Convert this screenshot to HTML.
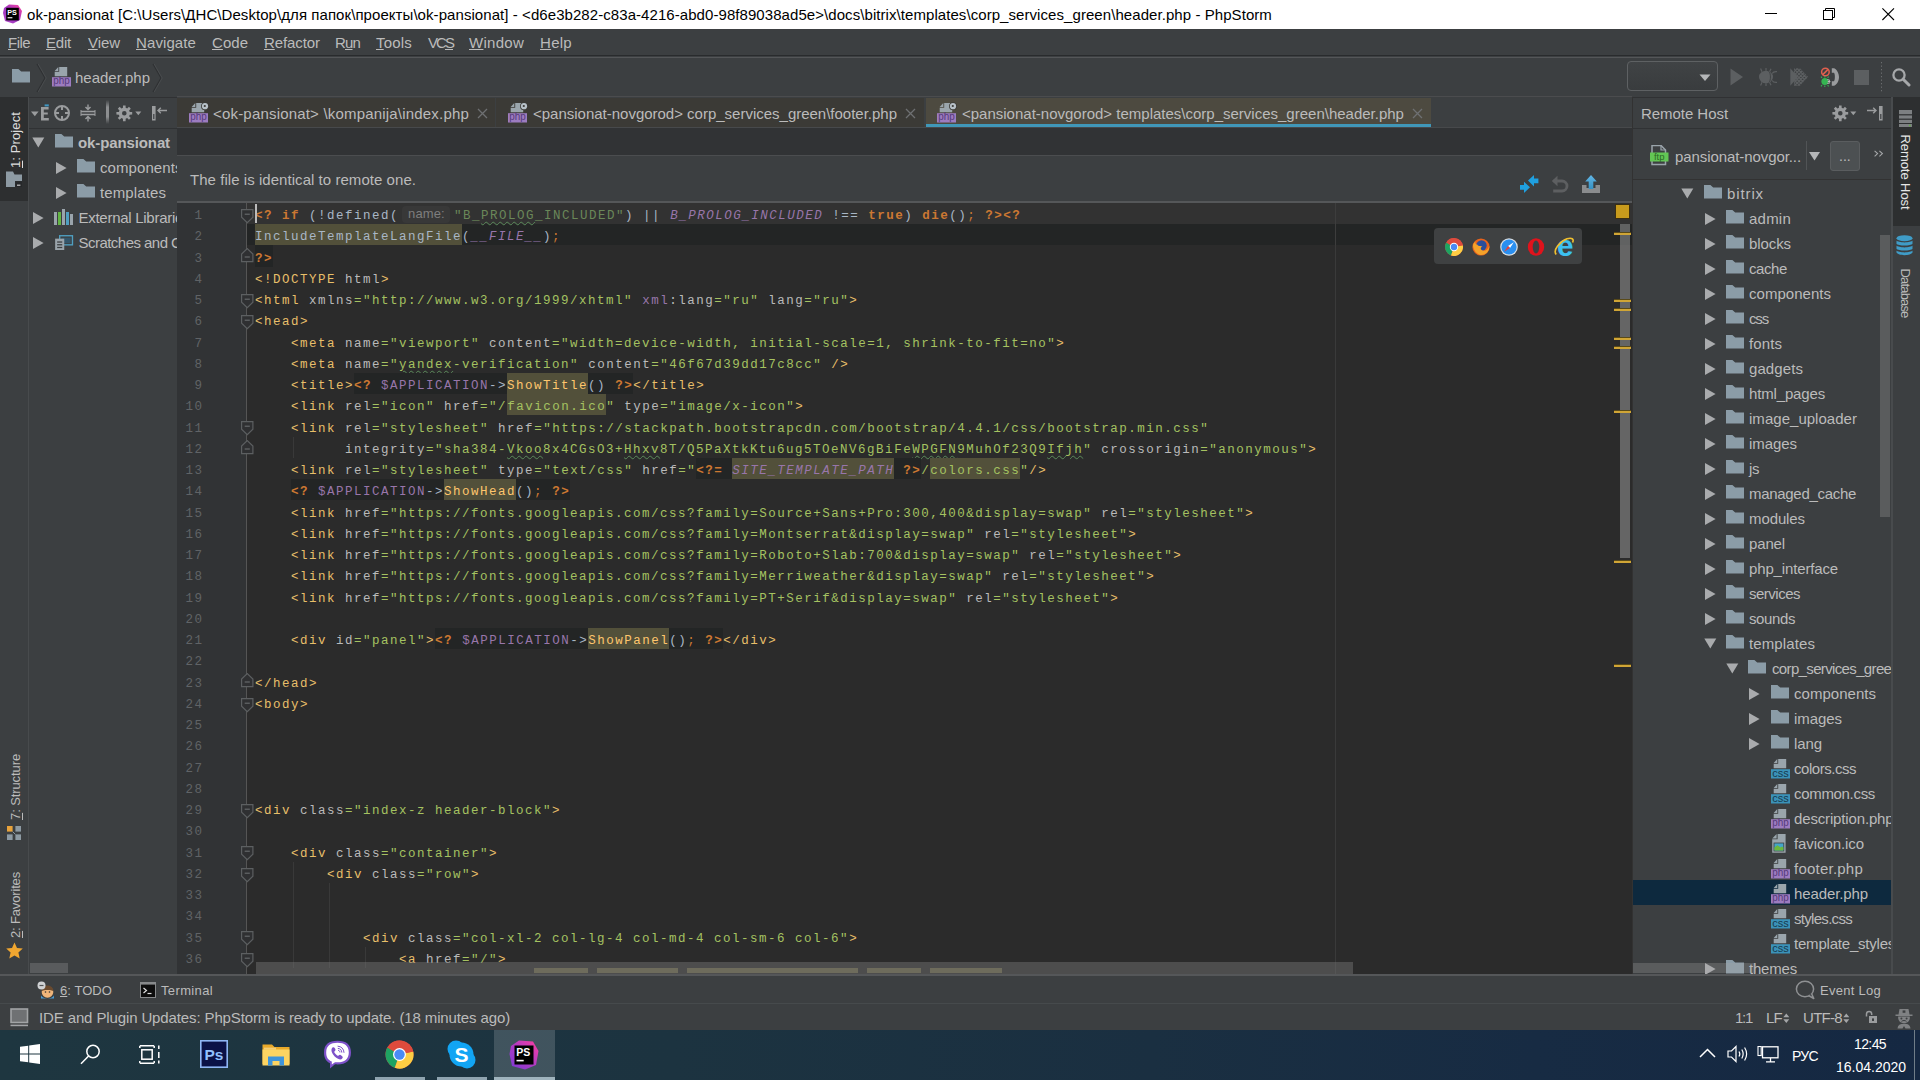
<!DOCTYPE html>
<html><head><meta charset="utf-8"><title>PhpStorm</title><style>
html,body{margin:0;padding:0;}
body{width:1920px;height:1080px;overflow:hidden;position:relative;background:#3c3f41;font-family:"Liberation Sans",sans-serif;}
.b{position:absolute;}
.t{position:absolute;white-space:pre;height:20px;line-height:20px;font-family:"Liberation Sans",sans-serif;}
.t u{text-decoration:underline;text-underline-offset:1px;text-decoration-thickness:1px;}
.cl{position:absolute;left:255px;height:21px;line-height:25.6px;white-space:pre;font-family:"Liberation Mono",monospace;font-size:12.5px;letter-spacing:1.5px;color:#a9b7c6;}
.ln{position:absolute;left:177px;width:26.5px;text-align:right;height:21px;line-height:25.6px;font-family:"Liberation Mono",monospace;font-size:12.5px;letter-spacing:1.5px;color:#606366;}
.cl span{display:inline-block;height:100%;vertical-align:top;}
.k{color:#cc7832;font-weight:bold;}
.o{color:#cc7832;}
.tg{color:#e8bf6a;}
.at{color:#bababa;}
.av{color:#a5c261;}
.st{color:#6a8759;}
.cn{color:#9876aa;font-style:italic;}
.vr{color:#9876aa;}
.fn{color:#ffc66d;}
.ww{background:#52503a;}
.pb{background:#232525;}
.wv{text-decoration:underline wavy #5a8a5a;text-decoration-thickness:1px;text-underline-offset:2px;}
</style></head><body>
<div class="b" style="left:0px;top:0px;width:1920px;height:29px;background:#ffffff;"></div>
<div class="t " style="left:27px;top:5px;font-size:15px;color:#000000;letter-spacing:0.067px;">ok-pansionat [C:\Users\ДНС\Desktop\для папок\проекты\ok-pansionat] - &lt;d6e3b282-c83a-4216-abd0-98f89038ad5e&gt;\docs\bitrix\templates\corp_services_green\header.php - PhpStorm</div>
<div class="b" style="left:0px;top:29px;width:1920px;height:27px;background:#3c3f41;"></div>
<div class="b" style="left:0px;top:55px;width:1920px;height:1px;background:#292b2d;"></div>
<div class="b" style="left:0px;top:56px;width:1920px;height:1px;background:#3c3f41;"></div>
<div class="t " style="left:8px;top:33px;font-size:15px;color:#bbbbbb;letter-spacing:-0.543px;"><u>F</u>ile</div>
<div class="t " style="left:46px;top:33px;font-size:15px;color:#bbbbbb;letter-spacing:-0.212px;"><u>E</u>dit</div>
<div class="t " style="left:88px;top:33px;font-size:15px;color:#bbbbbb;letter-spacing:-0.061px;"><u>V</u>iew</div>
<div class="t " style="left:136px;top:33px;font-size:15px;color:#bbbbbb;letter-spacing:0.100px;"><u>N</u>avigate</div>
<div class="t " style="left:212px;top:33px;font-size:15px;color:#bbbbbb;letter-spacing:0.035px;"><u>C</u>ode</div>
<div class="t " style="left:264px;top:33px;font-size:15px;color:#bbbbbb;letter-spacing:-0.086px;"><u>R</u>efactor</div>
<div class="t " style="left:335px;top:33px;font-size:15px;color:#bbbbbb;letter-spacing:-0.839px;">R<u>u</u>n</div>
<div class="t " style="left:376px;top:33px;font-size:15px;color:#bbbbbb;letter-spacing:0.196px;"><u>T</u>ools</div>
<div class="t " style="left:428px;top:33px;font-size:15px;color:#bbbbbb;letter-spacing:-1.948px;">VC<u>S</u></div>
<div class="t " style="left:469px;top:33px;font-size:15px;color:#bbbbbb;letter-spacing:0.275px;"><u>W</u>indow</div>
<div class="t " style="left:540px;top:33px;font-size:15px;color:#bbbbbb;letter-spacing:0.287px;"><u>H</u>elp</div>
<div class="b" style="left:0px;top:57px;width:1920px;height:40px;background:#3c3f41;"></div>
<div class="b" style="left:0px;top:57px;width:1920px;height:1px;background:#545658;"></div>
<div class="t " style="left:75px;top:68px;font-size:15px;color:#bbbbbb;letter-spacing:-0.008px;">header.php</div>
<div class="b" style="left:0px;top:97px;width:28px;height:879px;background:#3c3f41;"></div>
<div class="b" style="left:0px;top:97px;width:28px;height:103.5px;background:#2d2f30;"></div>
<div class="b" style="left:28px;top:97px;width:1px;height:879px;background:#484b4d;"></div>
<div class="b" style="left:29px;top:97px;width:149px;height:879px;background:#3c3f41;"></div>
<div class="b" style="left:29px;top:128px;width:148px;height:1px;background:#303234;"></div>
<div class="b" style="left:29px;top:97px;width:148px;height:1px;background:#303133;"></div>
<div class="b" style="left:1632px;top:97px;width:1px;height:879px;background:#323232;"></div>
<div class="b" style="left:1633px;top:97px;width:258px;height:879px;background:#3c3f41;"></div>
<div class="b" style="left:1633px;top:128px;width:258px;height:1px;background:#303234;"></div>
<div class="b" style="left:1632px;top:97px;width:288px;height:1px;background:#303133;"></div>
<div class="b" style="left:1633px;top:179px;width:258px;height:1px;background:#323232;"></div>
<div class="t " style="left:1641px;top:104px;font-size:15px;color:#bbbbbb;letter-spacing:-0.048px;">Remote Host</div>
<svg class="b" style="left:32px;top:137px;" width="13" height="11" viewBox="0 0 13 11"><path d="M0.3 0.5H12.3L6.3 10.5Z" fill="#a9abad"/></svg>
<svg class="b" style="left:55px;top:134.4px;" width="18" height="14" viewBox="0 0 18 14"><path d="M0 0H6.4L9.2 2.6H18V13.6H0Z" fill="#8b9ca7"/></svg>
<div class="t " style="left:78px;top:133px;font-size:15px;color:#bbbbbb;font-weight:bold;letter-spacing:-0.112px;">ok-pansionat</div>
<svg class="b" style="left:56px;top:162px;" width="11" height="12" viewBox="0 0 11 12"><path d="M0 0L10.6 6L0 12Z" fill="#a9abad"/></svg>
<svg class="b" style="left:77px;top:159.4px;" width="18" height="14" viewBox="0 0 18 14"><path d="M0 0H6.4L9.2 2.6H18V13.6H0Z" fill="#8b9ca7"/></svg>
<div class="t " style="left:100px;top:158px;font-size:15px;color:#bbbbbb;letter-spacing:0.078px;">components</div>
<svg class="b" style="left:56px;top:187px;" width="11" height="12" viewBox="0 0 11 12"><path d="M0 0L10.6 6L0 12Z" fill="#a9abad"/></svg>
<svg class="b" style="left:77px;top:184.4px;" width="18" height="14" viewBox="0 0 18 14"><path d="M0 0H6.4L9.2 2.6H18V13.6H0Z" fill="#8b9ca7"/></svg>
<div class="t " style="left:100px;top:183px;font-size:15px;color:#bbbbbb;letter-spacing:0.107px;">templates</div>
<svg class="b" style="left:33px;top:212px;" width="11" height="12" viewBox="0 0 11 12"><path d="M0 0L10.6 6L0 12Z" fill="#a9abad"/></svg>
<svg class="b" style="left:54px;top:209px;" width="21" height="16" viewBox="0 0 21 16"><rect x="0" y="3" width="3" height="13" fill="#9aa4ab"/><rect x="4" y="3" width="3" height="13" fill="#62b543"/><rect x="8" y="0" width="3" height="16" fill="#9aa4ab"/><rect x="12" y="3" width="3" height="13" fill="#4f9fc0"/><rect x="16" y="5" width="3" height="11" fill="#9aa4ab"/></svg>
<div class="t " style="left:78.5px;top:208px;font-size:15px;color:#bbbbbb;letter-spacing:-0.274px;">External Libraries</div>
<svg class="b" style="left:33px;top:237px;" width="11" height="12" viewBox="0 0 11 12"><path d="M0 0L10.6 6L0 12Z" fill="#a9abad"/></svg>
<svg class="b" style="left:55px;top:234.5px;" width="18.5" height="15.5" viewBox="0 0 20 17"><rect x="5" y="0.8" width="14" height="10" fill="none" stroke="#4f9fc0" stroke-width="1.5"/><rect x="7" y="3" width="10" height="6" fill="#33566b"/><rect x="0" y="4" width="10" height="12.5" fill="#9aa4ab"/><rect x="2.2" y="7" width="5.6" height="1.4" fill="#3c3f41"/><rect x="2.2" y="10" width="5.6" height="1.4" fill="#3c3f41"/><rect x="2.2" y="13" width="5.6" height="1.4" fill="#3c3f41"/></svg>
<div class="t " style="left:78.5px;top:233px;font-size:15px;color:#bbbbbb;letter-spacing:-0.532px;">Scratches and Consoles</div>
<div class="b" style="left:30px;top:963px;width:38px;height:10px;background:#595b5d;"></div>
<svg class="b" style="left:1681px;top:188px;" width="13" height="11" viewBox="0 0 13 11"><path d="M0.3 0.5H12.3L6.3 10.5Z" fill="#a9abad"/></svg>
<svg class="b" style="left:1704px;top:185.4px;" width="18" height="14" viewBox="0 0 18 14"><path d="M0 0H6.4L9.2 2.6H18V13.6H0Z" fill="#8b9ca7"/></svg>
<div class="t " style="left:1727px;top:184px;font-size:15px;color:#bbbbbb;letter-spacing:0.888px;">bitrix</div>
<svg class="b" style="left:1705px;top:213px;" width="11" height="12" viewBox="0 0 11 12"><path d="M0 0L10.6 6L0 12Z" fill="#a9abad"/></svg>
<svg class="b" style="left:1726px;top:210.4px;" width="18" height="14" viewBox="0 0 18 14"><path d="M0 0H6.4L9.2 2.6H18V13.6H0Z" fill="#8b9ca7"/></svg>
<div class="t " style="left:1749px;top:209px;font-size:15px;color:#bbbbbb;letter-spacing:0.229px;">admin</div>
<svg class="b" style="left:1705px;top:238px;" width="11" height="12" viewBox="0 0 11 12"><path d="M0 0L10.6 6L0 12Z" fill="#a9abad"/></svg>
<svg class="b" style="left:1726px;top:235.4px;" width="18" height="14" viewBox="0 0 18 14"><path d="M0 0H6.4L9.2 2.6H18V13.6H0Z" fill="#8b9ca7"/></svg>
<div class="t " style="left:1749px;top:234px;font-size:15px;color:#bbbbbb;letter-spacing:-0.086px;">blocks</div>
<svg class="b" style="left:1705px;top:263px;" width="11" height="12" viewBox="0 0 11 12"><path d="M0 0L10.6 6L0 12Z" fill="#a9abad"/></svg>
<svg class="b" style="left:1726px;top:260.4px;" width="18" height="14" viewBox="0 0 18 14"><path d="M0 0H6.4L9.2 2.6H18V13.6H0Z" fill="#8b9ca7"/></svg>
<div class="t " style="left:1749px;top:259px;font-size:15px;color:#bbbbbb;letter-spacing:-0.406px;">cache</div>
<svg class="b" style="left:1705px;top:288px;" width="11" height="12" viewBox="0 0 11 12"><path d="M0 0L10.6 6L0 12Z" fill="#a9abad"/></svg>
<svg class="b" style="left:1726px;top:285.4px;" width="18" height="14" viewBox="0 0 18 14"><path d="M0 0H6.4L9.2 2.6H18V13.6H0Z" fill="#8b9ca7"/></svg>
<div class="t " style="left:1749px;top:284px;font-size:15px;color:#bbbbbb;letter-spacing:0.028px;">components</div>
<svg class="b" style="left:1705px;top:313px;" width="11" height="12" viewBox="0 0 11 12"><path d="M0 0L10.6 6L0 12Z" fill="#a9abad"/></svg>
<svg class="b" style="left:1726px;top:310.4px;" width="18" height="14" viewBox="0 0 18 14"><path d="M0 0H6.4L9.2 2.6H18V13.6H0Z" fill="#8b9ca7"/></svg>
<div class="t " style="left:1749px;top:309px;font-size:15px;color:#bbbbbb;letter-spacing:-1.167px;">css</div>
<svg class="b" style="left:1705px;top:338px;" width="11" height="12" viewBox="0 0 11 12"><path d="M0 0L10.6 6L0 12Z" fill="#a9abad"/></svg>
<svg class="b" style="left:1726px;top:335.4px;" width="18" height="14" viewBox="0 0 18 14"><path d="M0 0H6.4L9.2 2.6H18V13.6H0Z" fill="#8b9ca7"/></svg>
<div class="t " style="left:1749px;top:334px;font-size:15px;color:#bbbbbb;letter-spacing:0.096px;">fonts</div>
<svg class="b" style="left:1705px;top:363px;" width="11" height="12" viewBox="0 0 11 12"><path d="M0 0L10.6 6L0 12Z" fill="#a9abad"/></svg>
<svg class="b" style="left:1726px;top:360.4px;" width="18" height="14" viewBox="0 0 18 14"><path d="M0 0H6.4L9.2 2.6H18V13.6H0Z" fill="#8b9ca7"/></svg>
<div class="t " style="left:1749px;top:359px;font-size:15px;color:#bbbbbb;letter-spacing:0.089px;">gadgets</div>
<svg class="b" style="left:1705px;top:388px;" width="11" height="12" viewBox="0 0 11 12"><path d="M0 0L10.6 6L0 12Z" fill="#a9abad"/></svg>
<svg class="b" style="left:1726px;top:385.4px;" width="18" height="14" viewBox="0 0 18 14"><path d="M0 0H6.4L9.2 2.6H18V13.6H0Z" fill="#8b9ca7"/></svg>
<div class="t " style="left:1749px;top:384px;font-size:15px;color:#bbbbbb;letter-spacing:-0.155px;">html_pages</div>
<svg class="b" style="left:1705px;top:413px;" width="11" height="12" viewBox="0 0 11 12"><path d="M0 0L10.6 6L0 12Z" fill="#a9abad"/></svg>
<svg class="b" style="left:1726px;top:410.4px;" width="18" height="14" viewBox="0 0 18 14"><path d="M0 0H6.4L9.2 2.6H18V13.6H0Z" fill="#8b9ca7"/></svg>
<div class="t " style="left:1749px;top:409px;font-size:15px;color:#bbbbbb;letter-spacing:0.030px;">image_uploader</div>
<svg class="b" style="left:1705px;top:438px;" width="11" height="12" viewBox="0 0 11 12"><path d="M0 0L10.6 6L0 12Z" fill="#a9abad"/></svg>
<svg class="b" style="left:1726px;top:435.4px;" width="18" height="14" viewBox="0 0 18 14"><path d="M0 0H6.4L9.2 2.6H18V13.6H0Z" fill="#8b9ca7"/></svg>
<div class="t " style="left:1749px;top:434px;font-size:15px;color:#bbbbbb;letter-spacing:-0.059px;">images</div>
<svg class="b" style="left:1705px;top:463px;" width="11" height="12" viewBox="0 0 11 12"><path d="M0 0L10.6 6L0 12Z" fill="#a9abad"/></svg>
<svg class="b" style="left:1726px;top:460.4px;" width="18" height="14" viewBox="0 0 18 14"><path d="M0 0H6.4L9.2 2.6H18V13.6H0Z" fill="#8b9ca7"/></svg>
<div class="t " style="left:1749px;top:459px;font-size:15px;color:#bbbbbb;letter-spacing:-0.416px;">js</div>
<svg class="b" style="left:1705px;top:488px;" width="11" height="12" viewBox="0 0 11 12"><path d="M0 0L10.6 6L0 12Z" fill="#a9abad"/></svg>
<svg class="b" style="left:1726px;top:485.4px;" width="18" height="14" viewBox="0 0 18 14"><path d="M0 0H6.4L9.2 2.6H18V13.6H0Z" fill="#8b9ca7"/></svg>
<div class="t " style="left:1749px;top:484px;font-size:15px;color:#bbbbbb;letter-spacing:-0.302px;">managed_cache</div>
<svg class="b" style="left:1705px;top:513px;" width="11" height="12" viewBox="0 0 11 12"><path d="M0 0L10.6 6L0 12Z" fill="#a9abad"/></svg>
<svg class="b" style="left:1726px;top:510.4px;" width="18" height="14" viewBox="0 0 18 14"><path d="M0 0H6.4L9.2 2.6H18V13.6H0Z" fill="#8b9ca7"/></svg>
<div class="t " style="left:1749px;top:509px;font-size:15px;color:#bbbbbb;letter-spacing:-0.100px;">modules</div>
<svg class="b" style="left:1705px;top:538px;" width="11" height="12" viewBox="0 0 11 12"><path d="M0 0L10.6 6L0 12Z" fill="#a9abad"/></svg>
<svg class="b" style="left:1726px;top:535.4px;" width="18" height="14" viewBox="0 0 18 14"><path d="M0 0H6.4L9.2 2.6H18V13.6H0Z" fill="#8b9ca7"/></svg>
<div class="t " style="left:1749px;top:534px;font-size:15px;color:#bbbbbb;letter-spacing:-0.141px;">panel</div>
<svg class="b" style="left:1705px;top:563px;" width="11" height="12" viewBox="0 0 11 12"><path d="M0 0L10.6 6L0 12Z" fill="#a9abad"/></svg>
<svg class="b" style="left:1726px;top:560.4px;" width="18" height="14" viewBox="0 0 18 14"><path d="M0 0H6.4L9.2 2.6H18V13.6H0Z" fill="#8b9ca7"/></svg>
<div class="t " style="left:1749px;top:559px;font-size:15px;color:#bbbbbb;letter-spacing:-0.146px;">php_interface</div>
<svg class="b" style="left:1705px;top:588px;" width="11" height="12" viewBox="0 0 11 12"><path d="M0 0L10.6 6L0 12Z" fill="#a9abad"/></svg>
<svg class="b" style="left:1726px;top:585.4px;" width="18" height="14" viewBox="0 0 18 14"><path d="M0 0H6.4L9.2 2.6H18V13.6H0Z" fill="#8b9ca7"/></svg>
<div class="t " style="left:1749px;top:584px;font-size:15px;color:#bbbbbb;letter-spacing:-0.502px;">services</div>
<svg class="b" style="left:1705px;top:613px;" width="11" height="12" viewBox="0 0 11 12"><path d="M0 0L10.6 6L0 12Z" fill="#a9abad"/></svg>
<svg class="b" style="left:1726px;top:610.4px;" width="18" height="14" viewBox="0 0 18 14"><path d="M0 0H6.4L9.2 2.6H18V13.6H0Z" fill="#8b9ca7"/></svg>
<div class="t " style="left:1749px;top:609px;font-size:15px;color:#bbbbbb;letter-spacing:-0.395px;">sounds</div>
<svg class="b" style="left:1704px;top:638px;" width="13" height="11" viewBox="0 0 13 11"><path d="M0.3 0.5H12.3L6.3 10.5Z" fill="#a9abad"/></svg>
<svg class="b" style="left:1726px;top:635.4px;" width="18" height="14" viewBox="0 0 18 14"><path d="M0 0H6.4L9.2 2.6H18V13.6H0Z" fill="#8b9ca7"/></svg>
<div class="t " style="left:1749px;top:634px;font-size:15px;color:#bbbbbb;letter-spacing:0.107px;">templates</div>
<svg class="b" style="left:1726px;top:663px;" width="13" height="11" viewBox="0 0 13 11"><path d="M0.3 0.5H12.3L6.3 10.5Z" fill="#a9abad"/></svg>
<svg class="b" style="left:1748px;top:660.4px;" width="18" height="14" viewBox="0 0 18 14"><path d="M0 0H6.4L9.2 2.6H18V13.6H0Z" fill="#8b9ca7"/></svg>
<div class="t " style="left:1772px;top:659px;font-size:15px;color:#bbbbbb;letter-spacing:-0.645px;">corp_services_green</div>
<svg class="b" style="left:1749px;top:688px;" width="11" height="12" viewBox="0 0 11 12"><path d="M0 0L10.6 6L0 12Z" fill="#a9abad"/></svg>
<svg class="b" style="left:1771px;top:685.4px;" width="18" height="14" viewBox="0 0 18 14"><path d="M0 0H6.4L9.2 2.6H18V13.6H0Z" fill="#8b9ca7"/></svg>
<div class="t " style="left:1794px;top:684px;font-size:15px;color:#bbbbbb;letter-spacing:0.028px;">components</div>
<svg class="b" style="left:1749px;top:713px;" width="11" height="12" viewBox="0 0 11 12"><path d="M0 0L10.6 6L0 12Z" fill="#a9abad"/></svg>
<svg class="b" style="left:1771px;top:710.4px;" width="18" height="14" viewBox="0 0 18 14"><path d="M0 0H6.4L9.2 2.6H18V13.6H0Z" fill="#8b9ca7"/></svg>
<div class="t " style="left:1794px;top:709px;font-size:15px;color:#bbbbbb;letter-spacing:-0.059px;">images</div>
<svg class="b" style="left:1749px;top:738px;" width="11" height="12" viewBox="0 0 11 12"><path d="M0 0L10.6 6L0 12Z" fill="#a9abad"/></svg>
<svg class="b" style="left:1771px;top:735.4px;" width="18" height="14" viewBox="0 0 18 14"><path d="M0 0H6.4L9.2 2.6H18V13.6H0Z" fill="#8b9ca7"/></svg>
<div class="t " style="left:1794px;top:734px;font-size:15px;color:#bbbbbb;letter-spacing:-0.090px;">lang</div>
<svg class="b" style="left:1771px;top:759px;overflow:visible;" width="19" height="20" viewBox="0 0 19 20"><path d="M7.2 0H15.2V9.2H2.7V4.8H7.2Z" fill="#9aa5ac"/><path d="M2.7 3.9L6.3 0V3.9Z" fill="#9aa5ac"/><rect x="0" y="10.2" width="19" height="9.3" fill="#3b92b8"/><text x="9.5" y="17.6" font-family="Liberation Sans, sans-serif" font-size="11.5" fill="#173a4e" text-anchor="middle" textLength="16.5" lengthAdjust="spacingAndGlyphs">css</text></svg>
<div class="t " style="left:1794px;top:759px;font-size:15px;color:#bbbbbb;letter-spacing:-0.468px;">colors.css</div>
<svg class="b" style="left:1771px;top:784px;overflow:visible;" width="19" height="20" viewBox="0 0 19 20"><path d="M7.2 0H15.2V9.2H2.7V4.8H7.2Z" fill="#9aa5ac"/><path d="M2.7 3.9L6.3 0V3.9Z" fill="#9aa5ac"/><rect x="0" y="10.2" width="19" height="9.3" fill="#3b92b8"/><text x="9.5" y="17.6" font-family="Liberation Sans, sans-serif" font-size="11.5" fill="#173a4e" text-anchor="middle" textLength="16.5" lengthAdjust="spacingAndGlyphs">css</text></svg>
<div class="t " style="left:1794px;top:784px;font-size:15px;color:#bbbbbb;letter-spacing:-0.319px;">common.css</div>
<svg class="b" style="left:1771px;top:809px;overflow:visible;" width="19" height="20" viewBox="0 0 19 20"><path d="M7.2 0H15.2V9.2H2.7V4.8H7.2Z" fill="#9aa5ac"/><path d="M2.7 3.9L6.3 0V3.9Z" fill="#9aa5ac"/><rect x="0" y="10.2" width="19" height="9.3" fill="#9d7cc0"/><text x="9.5" y="17.3" font-family="Liberation Sans, sans-serif" font-size="10" fill="#54397a" text-anchor="middle" textLength="16.5" lengthAdjust="spacingAndGlyphs">php</text></svg>
<div class="t " style="left:1794px;top:809px;font-size:15px;color:#bbbbbb;letter-spacing:-0.149px;">description.php</div>
<svg class="b" style="left:1771px;top:834px;overflow:visible;" width="19" height="20" viewBox="0 0 19 20"><path d="M6.6 0H14.6V18.8H1.2V5.3H6.6Z" fill="#9aa5ac"/><path d="M1.2 4.4L5.6 0V4.4Z" fill="#9aa5ac"/><rect x="2.6" y="8.6" width="10.6" height="8.8" fill="#3c3f41"/><rect x="3.4" y="9.4" width="9" height="7.2" fill="#45a5c9"/><path d="M3.4 16.6V13.4L6.4 11.2L9.6 13.4L11 12.6L12.4 13.6V16.6Z" fill="#6cb83c"/></svg>
<div class="t " style="left:1794px;top:834px;font-size:15px;color:#bbbbbb;letter-spacing:-0.079px;">favicon.ico</div>
<svg class="b" style="left:1771px;top:859px;overflow:visible;" width="19" height="20" viewBox="0 0 19 20"><path d="M7.2 0H15.2V9.2H2.7V4.8H7.2Z" fill="#9aa5ac"/><path d="M2.7 3.9L6.3 0V3.9Z" fill="#9aa5ac"/><rect x="0" y="10.2" width="19" height="9.3" fill="#9d7cc0"/><text x="9.5" y="17.3" font-family="Liberation Sans, sans-serif" font-size="10" fill="#54397a" text-anchor="middle" textLength="16.5" lengthAdjust="spacingAndGlyphs">php</text></svg>
<div class="t " style="left:1794px;top:859px;font-size:15px;color:#bbbbbb;letter-spacing:0.227px;">footer.php</div>
<div class="b" style="left:1633px;top:880px;width:258px;height:25px;background:#0d293e;"></div>
<svg class="b" style="left:1771px;top:884px;overflow:visible;" width="19" height="20" viewBox="0 0 19 20"><path d="M7.2 0H15.2V9.2H2.7V4.8H7.2Z" fill="#9aa5ac"/><path d="M2.7 3.9L6.3 0V3.9Z" fill="#9aa5ac"/><rect x="0" y="10.2" width="19" height="9.3" fill="#9d7cc0"/><text x="9.5" y="17.3" font-family="Liberation Sans, sans-serif" font-size="10" fill="#54397a" text-anchor="middle" textLength="16.5" lengthAdjust="spacingAndGlyphs">php</text></svg>
<div class="t " style="left:1794px;top:884px;font-size:15px;color:#bbbbbb;letter-spacing:-0.108px;">header.php</div>
<svg class="b" style="left:1771px;top:909px;overflow:visible;" width="19" height="20" viewBox="0 0 19 20"><path d="M7.2 0H15.2V9.2H2.7V4.8H7.2Z" fill="#9aa5ac"/><path d="M2.7 3.9L6.3 0V3.9Z" fill="#9aa5ac"/><rect x="0" y="10.2" width="19" height="9.3" fill="#3b92b8"/><text x="9.5" y="17.6" font-family="Liberation Sans, sans-serif" font-size="11.5" fill="#173a4e" text-anchor="middle" textLength="16.5" lengthAdjust="spacingAndGlyphs">css</text></svg>
<div class="t " style="left:1794px;top:909px;font-size:15px;color:#bbbbbb;letter-spacing:-0.701px;">styles.css</div>
<svg class="b" style="left:1771px;top:934px;overflow:visible;" width="19" height="20" viewBox="0 0 19 20"><path d="M7.2 0H15.2V9.2H2.7V4.8H7.2Z" fill="#9aa5ac"/><path d="M2.7 3.9L6.3 0V3.9Z" fill="#9aa5ac"/><rect x="0" y="10.2" width="19" height="9.3" fill="#3b92b8"/><text x="9.5" y="17.6" font-family="Liberation Sans, sans-serif" font-size="11.5" fill="#173a4e" text-anchor="middle" textLength="16.5" lengthAdjust="spacingAndGlyphs">css</text></svg>
<div class="t " style="left:1794px;top:934px;font-size:15px;color:#bbbbbb;letter-spacing:-0.205px;">template_styles.css</div>
<svg class="b" style="left:1705px;top:963px;" width="11" height="12" viewBox="0 0 11 12"><path d="M0 0L10.6 6L0 12Z" fill="#a9abad"/></svg>
<svg class="b" style="left:1726px;top:960.4px;" width="18" height="14" viewBox="0 0 18 14"><path d="M0 0H6.4L9.2 2.6H18V13.6H0Z" fill="#8b9ca7"/></svg>
<div class="t " style="left:1749px;top:959px;font-size:15px;color:#bbbbbb;letter-spacing:-0.198px;">themes</div>
<div class="b" style="left:1880px;top:235px;width:10px;height:282px;background:rgba(170,170,170,0.28);"></div>
<div class="b" style="left:1633px;top:963px;width:123px;height:10px;background:rgba(170,170,170,0.28);"></div>
<div class="b" style="left:177px;top:97px;width:1455px;height:31px;background:#3c3f41;"></div>
<div class="b" style="left:177px;top:96px;width:1455px;height:1px;background:#4b4c4e;"></div>
<div class="b" style="left:177px;top:98px;width:318px;height:30px;background:#3b3a36;"></div>
<div class="b" style="left:496px;top:98px;width:428px;height:30px;background:#3b3a36;"></div>
<div class="b" style="left:926px;top:98px;width:505px;height:30px;background:#4d4a40;"></div>
<div class="b" style="left:926px;top:124px;width:505px;height:4px;background:#4097b8;"></div>
<svg class="b" style="left:189px;top:103.3px;overflow:visible;" width="19" height="20" viewBox="0 0 19 20"><path d="M7.2 0H15.2V9.2H2.7V4.8H7.2Z" fill="#9aa5ac"/><path d="M2.7 3.9L6.3 0V3.9Z" fill="#9aa5ac"/><circle cx="16" cy="3.2" r="3.9" fill="#3b3a36"/><circle cx="16" cy="3.2" r="3.1" fill="#b7c1c8"/><circle cx="15.8" cy="3" r="1.1" fill="#3b3a36"/><rect x="0" y="10.2" width="19" height="9.3" fill="#9d7cc0"/><text x="9.5" y="17.3" font-family="Liberation Sans, sans-serif" font-size="10" fill="#54397a" text-anchor="middle" textLength="16.5" lengthAdjust="spacingAndGlyphs">php</text></svg>
<div class="t " style="left:213px;top:104px;font-size:15px;color:#bbbbbb;letter-spacing:0.190px;">&lt;ok-pansionat&gt; \kompanija\index.php</div>
<svg class="b" style="left:477px;top:108px;" width="11" height="11" viewBox="0 0 11 11"><path d="M1 1L10 10M10 1L1 10" stroke="#6e7072" stroke-width="1.3"/></svg>
<svg class="b" style="left:508px;top:103.3px;overflow:visible;" width="19" height="20" viewBox="0 0 19 20"><path d="M7.2 0H15.2V9.2H2.7V4.8H7.2Z" fill="#9aa5ac"/><path d="M2.7 3.9L6.3 0V3.9Z" fill="#9aa5ac"/><circle cx="16" cy="3.2" r="3.9" fill="#3b3a36"/><circle cx="16" cy="3.2" r="3.1" fill="#b7c1c8"/><circle cx="15.8" cy="3" r="1.1" fill="#3b3a36"/><rect x="0" y="10.2" width="19" height="9.3" fill="#9d7cc0"/><text x="9.5" y="17.3" font-family="Liberation Sans, sans-serif" font-size="10" fill="#54397a" text-anchor="middle" textLength="16.5" lengthAdjust="spacingAndGlyphs">php</text></svg>
<div class="t " style="left:533px;top:104px;font-size:15px;color:#bbbbbb;letter-spacing:-0.008px;">&lt;pansionat-novgorod&gt; corp_services_green\footer.php</div>
<svg class="b" style="left:905px;top:108px;" width="11" height="11" viewBox="0 0 11 11"><path d="M1 1L10 10M10 1L1 10" stroke="#6e7072" stroke-width="1.3"/></svg>
<svg class="b" style="left:937px;top:103.3px;overflow:visible;" width="19" height="20" viewBox="0 0 19 20"><path d="M7.2 0H15.2V9.2H2.7V4.8H7.2Z" fill="#9aa5ac"/><path d="M2.7 3.9L6.3 0V3.9Z" fill="#9aa5ac"/><circle cx="16" cy="3.2" r="3.9" fill="#3b3a36"/><circle cx="16" cy="3.2" r="3.1" fill="#b7c1c8"/><circle cx="15.8" cy="3" r="1.1" fill="#3b3a36"/><rect x="0" y="10.2" width="19" height="9.3" fill="#9d7cc0"/><text x="9.5" y="17.3" font-family="Liberation Sans, sans-serif" font-size="10" fill="#54397a" text-anchor="middle" textLength="16.5" lengthAdjust="spacingAndGlyphs">php</text></svg>
<div class="t " style="left:962px;top:104px;font-size:15px;color:#bbbbbb;letter-spacing:0.000px;">&lt;pansionat-novgorod&gt; templates\corp_services_green\header.php</div>
<svg class="b" style="left:1412px;top:108px;" width="11" height="11" viewBox="0 0 11 11"><path d="M1 1L10 10M10 1L1 10" stroke="#6e7072" stroke-width="1.3"/></svg>
<div class="b" style="left:177px;top:127px;width:1455px;height:1px;background:#47494b;"></div>
<div class="b" style="left:177px;top:128px;width:1455px;height:27px;background:#313335;"></div>
<div class="b" style="left:177px;top:155px;width:1455px;height:1px;background:#4b4d4f;"></div>
<div class="b" style="left:177px;top:156px;width:1455px;height:46px;background:#3c3f41;"></div>
<div class="b" style="left:177px;top:201px;width:1455px;height:2px;background:#555759;"></div>
<div class="t " style="left:190px;top:170px;font-size:15px;color:#bbbbbb;letter-spacing:0.048px;">The file is identical to remote one.</div>
<div class="b" style="left:177px;top:203px;width:1455px;height:771px;background:#2b2b2b;"></div>
<div class="b" style="left:177px;top:203px;width:70px;height:771px;background:#313335;"></div>
<div class="b" style="left:246px;top:203px;width:1px;height:771px;background:#555555;"></div>
<div class="b" style="left:1335px;top:203px;width:1px;height:771px;background:#3a3a3a;"></div>
<div class="b" style="left:1632px;top:97px;width:1px;height:879px;background:#323232;"></div>
<div class="b" style="left:1891px;top:97px;width:29px;height:879px;background:#3c3f41;"></div>
<div class="b" style="left:1891px;top:97px;width:2px;height:879px;background:#484b4d;"></div>
<div class="b" style="left:1893px;top:97px;width:27px;height:129px;background:#2d2f30;"></div>
<div class="b" style="left:0px;top:974px;width:1920px;height:2px;background:#555759;"></div>
<div class="b" style="left:0px;top:976px;width:1920px;height:28px;background:#3c3f41;"></div>
<div class="b" style="left:0px;top:1003px;width:1920px;height:1px;background:#464a4c;"></div>
<div class="b" style="left:0px;top:1004px;width:1920px;height:26px;background:#3c3f41;"></div>
<div class="t " style="left:60px;top:981px;font-size:13px;color:#bbbbbb;letter-spacing:0.066px;"><u>6</u>: TODO</div>
<div class="t " style="left:161px;top:981px;font-size:13px;color:#bbbbbb;letter-spacing:0.359px;">Terminal</div>
<div class="t " style="left:1820px;top:981px;font-size:13px;color:#bbbbbb;letter-spacing:0.273px;">Event Log</div>
<div class="t " style="left:39px;top:1008px;font-size:15px;color:#bbbbbb;letter-spacing:-0.122px;">IDE and Plugin Updates: PhpStorm is ready to update. (18 minutes ago)</div>
<div class="t " style="left:1735px;top:1008px;font-size:15px;color:#bbbbbb;letter-spacing:-1.284px;">1:1</div>
<div class="t " style="left:1766px;top:1008px;font-size:15px;color:#bbbbbb;letter-spacing:-0.753px;">LF</div>
<div class="t " style="left:1803px;top:1008px;font-size:15px;color:#bbbbbb;letter-spacing:-0.699px;">UTF-8</div>
<div class="b" style="left:247px;top:203px;width:1385px;height:21px;background:#323232;"></div>
<div class="b" style="left:247px;top:224px;width:1385px;height:21px;background:#232525;"></div>
<div class="b" style="left:293px;top:437px;width:1px;height:21px;background:#393939;"></div>
<div class="b" style="left:293px;top:862px;width:1px;height:106px;background:#393939;"></div>
<div class="b" style="left:329px;top:883px;width:1px;height:85px;background:#393939;"></div>
<div class="b" style="left:365px;top:947px;width:1px;height:21px;background:#393939;"></div>
<div class="ln" style="top:203px;line-height:27.6px">1</div>
<div class="cl" style="top:203px;height:21px;line-height:27.6px"><span class="k">&lt;?</span> <span class="k">if</span> (!defined(<span style="width:55px;"><span style="position:absolute;margin-left:3px;margin-top:3px;width:48px;height:17px;border-radius:4px;background:#383838;"></span><span style="position:relative;top:-3px;margin-left:9px;font-family:'Liberation Sans',sans-serif;font-size:13px;color:#7e7e7e;letter-spacing:0.1px;">name:</span></span><span class="st">"B_<span class="wv">PROLOG</span>_INCLUDED"</span>) || <span class="cn">B_PROLOG_INCLUDED</span> !== <span class="k">true</span>) <span class="k">die</span>()<span class="o">;</span> <span class="k">?&gt;&lt;?</span></div>
<div class="ln" style="top:224px;line-height:27.6px">2</div>
<div class="cl" style="top:224px;height:21px;line-height:27.6px"><span class="ww">IncludeTemplateLangFile</span>(<span class="cn">__FILE__</span>)<span class="o">;</span></div>
<div class="ln" style="top:245px;line-height:29.6px">3</div>
<div class="cl" style="top:245px;height:22px;line-height:29.6px"><span class="pb"><span class="k">?&gt;</span></span></div>
<div class="ln" style="top:267px;line-height:27.6px">4</div>
<div class="cl" style="top:267px;height:21px;line-height:27.6px"><span class="tg">&lt;!DOCTYPE </span><span class="at">html</span><span class="tg">&gt;</span></div>
<div class="ln" style="top:288px;line-height:27.6px">5</div>
<div class="cl" style="top:288px;height:21px;line-height:27.6px"><span class="tg">&lt;html</span> <span class="at">xmlns</span><span class="av">=&quot;http:<span>/</span>/www.w3.org/1999/xhtml&quot;</span> <span class="vr">xml</span><span class="at">:lang</span><span class="av">=&quot;ru&quot;</span> <span class="at">lang</span><span class="av">=&quot;ru&quot;</span><span class="tg">&gt;</span></div>
<div class="ln" style="top:309px;line-height:27.6px">6</div>
<div class="cl" style="top:309px;height:21px;line-height:27.6px"><span class="tg">&lt;head&gt;</span></div>
<div class="ln" style="top:330px;line-height:29.6px">7</div>
<div class="cl" style="top:330px;height:22px;line-height:29.6px">    <span class="tg">&lt;meta</span> <span class="at">name</span><span class="av">=&quot;viewport&quot;</span> <span class="at">content</span><span class="av">=&quot;width=device-width, initial-scale=1, shrink-to-fit=no&quot;</span><span class="tg">&gt;</span></div>
<div class="ln" style="top:352px;line-height:27.6px">8</div>
<div class="cl" style="top:352px;height:21px;line-height:27.6px">    <span class="tg">&lt;meta</span> <span class="at">name</span><span class="av">="<span class="wv">yandex</span>-verification"</span> <span class="at">content</span><span class="av">=&quot;46f67d39dd17c8cc&quot;</span> <span class="tg">/&gt;</span></div>
<div class="ln" style="top:373px;line-height:27.6px">9</div>
<div class="cl" style="top:373px;height:21px;line-height:27.6px">    <span class="tg">&lt;title&gt;</span><span class="pb"><span class="k">&lt;?</span> <span class="vr">$APPLICATION</span>-><span class="fn ww">ShowTitle</span>() <span class="k">?&gt;</span></span><span class="tg">&lt;/title&gt;</span></div>
<div class="ln" style="top:394px;line-height:27.6px">10</div>
<div class="cl" style="top:394px;height:21px;line-height:27.6px">    <span class="tg">&lt;link</span> <span class="at">rel</span><span class="av">=&quot;icon&quot;</span> <span class="at">href</span><span class="av">="/<span class="ww">favicon.ico</span>"</span> <span class="at">type</span><span class="av">=&quot;image/x-icon&quot;</span><span class="tg">&gt;</span></div>
<div class="ln" style="top:415px;line-height:29.6px">11</div>
<div class="cl" style="top:415px;height:22px;line-height:29.6px">    <span class="tg">&lt;link</span> <span class="at">rel</span><span class="av">=&quot;stylesheet&quot;</span> <span class="at">href</span><span class="av">=&quot;https:<span>/</span>/stackpath.bootstrapcdn.com/bootstrap/4.4.1/css/bootstrap.min.css&quot;</span></div>
<div class="ln" style="top:437px;line-height:27.6px">12</div>
<div class="cl" style="top:437px;height:21px;line-height:27.6px">          <span class="at">integrity</span><span class="av">="sha384-<span class="wv">Vkoo</span>8x4CGsO3+<span class="wv">Hhxv</span>8T/Q5PaXtkKtu6ug5TOeNV6gBiFe<span class="wv">WPGFN</span>9MuhOf23Q9<span class="wv">Ifjh</span>"</span> <span class="at">crossorigin</span><span class="av">=&quot;anonymous&quot;</span><span class="tg">&gt;</span></div>
<div class="ln" style="top:458px;line-height:27.6px">13</div>
<div class="cl" style="top:458px;height:21px;line-height:27.6px">    <span class="tg">&lt;link</span> <span class="at">rel</span><span class="av">=&quot;stylesheet&quot;</span> <span class="at">type</span><span class="av">=&quot;text/css&quot;</span> <span class="at">href</span><span class="av">=&quot;</span><span class="pb"><span class="k">&lt;?=</span> <span class="cn ww">SITE_TEMPLATE_PATH</span> <span class="k">?&gt;</span></span><span class="av">/<span class="ww">colors.css</span>"</span><span class="tg">/&gt;</span></div>
<div class="ln" style="top:479px;line-height:27.6px">14</div>
<div class="cl" style="top:479px;height:21px;line-height:27.6px">    <span class="pb"><span class="k">&lt;?</span> <span class="vr">$APPLICATION</span>-><span class="fn ww">ShowHead</span>()<span class="o">;</span> <span class="k">?&gt;</span></span></div>
<div class="ln" style="top:500px;line-height:29.6px">15</div>
<div class="cl" style="top:500px;height:22px;line-height:29.6px">    <span class="tg">&lt;link</span> <span class="at">href</span><span class="av">=&quot;https:<span>/</span>/fonts.googleapis.com/css?family=Source+Sans+Pro:300,400&amp;display=swap&quot;</span> <span class="at">rel</span><span class="av">=&quot;stylesheet&quot;</span><span class="tg">&gt;</span></div>
<div class="ln" style="top:522px;line-height:27.6px">16</div>
<div class="cl" style="top:522px;height:21px;line-height:27.6px">    <span class="tg">&lt;link</span> <span class="at">href</span><span class="av">=&quot;https:<span>/</span>/fonts.googleapis.com/css?family=Montserrat&amp;display=swap&quot;</span> <span class="at">rel</span><span class="av">=&quot;stylesheet&quot;</span><span class="tg">&gt;</span></div>
<div class="ln" style="top:543px;line-height:27.6px">17</div>
<div class="cl" style="top:543px;height:21px;line-height:27.6px">    <span class="tg">&lt;link</span> <span class="at">href</span><span class="av">=&quot;https:<span>/</span>/fonts.googleapis.com/css?family=Roboto+Slab:700&amp;display=swap&quot;</span> <span class="at">rel</span><span class="av">=&quot;stylesheet&quot;</span><span class="tg">&gt;</span></div>
<div class="ln" style="top:564px;line-height:27.6px">18</div>
<div class="cl" style="top:564px;height:21px;line-height:27.6px">    <span class="tg">&lt;link</span> <span class="at">href</span><span class="av">=&quot;https:<span>/</span>/fonts.googleapis.com/css?family=Merriweather&amp;display=swap&quot;</span> <span class="at">rel</span><span class="av">=&quot;stylesheet&quot;</span><span class="tg">&gt;</span></div>
<div class="ln" style="top:585px;line-height:29.6px">19</div>
<div class="cl" style="top:585px;height:22px;line-height:29.6px">    <span class="tg">&lt;link</span> <span class="at">href</span><span class="av">=&quot;https:<span>/</span>/fonts.googleapis.com/css?family=PT+Serif&amp;display=swap&quot;</span> <span class="at">rel</span><span class="av">=&quot;stylesheet&quot;</span><span class="tg">&gt;</span></div>
<div class="ln" style="top:607px;line-height:27.6px">20</div>
<div class="ln" style="top:628px;line-height:27.6px">21</div>
<div class="cl" style="top:628px;height:21px;line-height:27.6px">    <span class="tg">&lt;div</span> <span class="at">id</span><span class="av">=&quot;panel&quot;</span><span class="tg">&gt;</span><span class="pb"><span class="k">&lt;?</span> <span class="vr">$APPLICATION</span>-><span class="fn ww">ShowPanel</span>()<span class="o">;</span> <span class="k">?&gt;</span></span><span class="tg">&lt;/div&gt;</span></div>
<div class="ln" style="top:649px;line-height:27.6px">22</div>
<div class="ln" style="top:670px;line-height:29.6px">23</div>
<div class="cl" style="top:670px;height:22px;line-height:29.6px"><span class="tg">&lt;/head&gt;</span></div>
<div class="ln" style="top:692px;line-height:27.6px">24</div>
<div class="cl" style="top:692px;height:21px;line-height:27.6px"><span class="tg">&lt;body&gt;</span></div>
<div class="ln" style="top:713px;line-height:27.6px">25</div>
<div class="ln" style="top:734px;line-height:27.6px">26</div>
<div class="ln" style="top:755px;line-height:29.6px">27</div>
<div class="ln" style="top:777px;line-height:27.6px">28</div>
<div class="ln" style="top:798px;line-height:27.6px">29</div>
<div class="cl" style="top:798px;height:21px;line-height:27.6px"><span class="tg">&lt;div</span> <span class="at">class</span><span class="av">=&quot;index-z header-block&quot;</span><span class="tg">&gt;</span></div>
<div class="ln" style="top:819px;line-height:27.6px">30</div>
<div class="ln" style="top:840px;line-height:29.6px">31</div>
<div class="cl" style="top:840px;height:22px;line-height:29.6px">    <span class="tg">&lt;div</span> <span class="at">class</span><span class="av">=&quot;container&quot;</span><span class="tg">&gt;</span></div>
<div class="ln" style="top:862px;line-height:27.6px">32</div>
<div class="cl" style="top:862px;height:21px;line-height:27.6px">        <span class="tg">&lt;div</span> <span class="at">class</span><span class="av">=&quot;row&quot;</span><span class="tg">&gt;</span></div>
<div class="ln" style="top:883px;line-height:27.6px">33</div>
<div class="ln" style="top:904px;line-height:27.6px">34</div>
<div class="ln" style="top:925px;line-height:29.6px">35</div>
<div class="cl" style="top:925px;height:22px;line-height:29.6px">            <span class="tg">&lt;div</span> <span class="at">class</span><span class="av">=&quot;col-xl-2 col-lg-4 col-md-4 col-sm-6 col-6&quot;</span><span class="tg">&gt;</span></div>
<div class="ln" style="top:947px;line-height:27.6px">36</div>
<div class="cl" style="top:947px;height:21px;line-height:27.6px">                <span class="tg">&lt;a</span> <span class="at">href</span><span class="av">=&quot;/&quot;</span><span class="tg">&gt;</span></div>
<svg class="b" style="left:240.5px;top:208.5px;" width="13" height="15" viewBox="0 0 13 15"><path d="M0.6 0.6H11.9V8.2L6.25 13.7L0.6 8.2Z" fill="#2f3032" stroke="#5c5f61" stroke-width="1.2"/><path d="M3.7 5.2H8.8" stroke="#6a6d6f" stroke-width="1.1"/></svg>
<svg class="b" style="left:240.5px;top:293.5px;" width="13" height="15" viewBox="0 0 13 15"><path d="M0.6 0.6H11.9V8.2L6.25 13.7L0.6 8.2Z" fill="#2f3032" stroke="#5c5f61" stroke-width="1.2"/><path d="M3.7 5.2H8.8" stroke="#6a6d6f" stroke-width="1.1"/></svg>
<svg class="b" style="left:240.5px;top:314.5px;" width="13" height="15" viewBox="0 0 13 15"><path d="M0.6 0.6H11.9V8.2L6.25 13.7L0.6 8.2Z" fill="#2f3032" stroke="#5c5f61" stroke-width="1.2"/><path d="M3.7 5.2H8.8" stroke="#6a6d6f" stroke-width="1.1"/></svg>
<svg class="b" style="left:240.5px;top:420.5px;" width="13" height="15" viewBox="0 0 13 15"><path d="M0.6 0.6H11.9V8.2L6.25 13.7L0.6 8.2Z" fill="#2f3032" stroke="#5c5f61" stroke-width="1.2"/><path d="M3.7 5.2H8.8" stroke="#6a6d6f" stroke-width="1.1"/></svg>
<svg class="b" style="left:240.5px;top:697.5px;" width="13" height="15" viewBox="0 0 13 15"><path d="M0.6 0.6H11.9V8.2L6.25 13.7L0.6 8.2Z" fill="#2f3032" stroke="#5c5f61" stroke-width="1.2"/><path d="M3.7 5.2H8.8" stroke="#6a6d6f" stroke-width="1.1"/></svg>
<svg class="b" style="left:240.5px;top:803.5px;" width="13" height="15" viewBox="0 0 13 15"><path d="M0.6 0.6H11.9V8.2L6.25 13.7L0.6 8.2Z" fill="#2f3032" stroke="#5c5f61" stroke-width="1.2"/><path d="M3.7 5.2H8.8" stroke="#6a6d6f" stroke-width="1.1"/></svg>
<svg class="b" style="left:240.5px;top:845.5px;" width="13" height="15" viewBox="0 0 13 15"><path d="M0.6 0.6H11.9V8.2L6.25 13.7L0.6 8.2Z" fill="#2f3032" stroke="#5c5f61" stroke-width="1.2"/><path d="M3.7 5.2H8.8" stroke="#6a6d6f" stroke-width="1.1"/></svg>
<svg class="b" style="left:240.5px;top:867.5px;" width="13" height="15" viewBox="0 0 13 15"><path d="M0.6 0.6H11.9V8.2L6.25 13.7L0.6 8.2Z" fill="#2f3032" stroke="#5c5f61" stroke-width="1.2"/><path d="M3.7 5.2H8.8" stroke="#6a6d6f" stroke-width="1.1"/></svg>
<svg class="b" style="left:240.5px;top:930.5px;" width="13" height="15" viewBox="0 0 13 15"><path d="M0.6 0.6H11.9V8.2L6.25 13.7L0.6 8.2Z" fill="#2f3032" stroke="#5c5f61" stroke-width="1.2"/><path d="M3.7 5.2H8.8" stroke="#6a6d6f" stroke-width="1.1"/></svg>
<svg class="b" style="left:240.5px;top:952.5px;" width="13" height="15" viewBox="0 0 13 15"><path d="M0.6 0.6H11.9V8.2L6.25 13.7L0.6 8.2Z" fill="#2f3032" stroke="#5c5f61" stroke-width="1.2"/><path d="M3.7 5.2H8.8" stroke="#6a6d6f" stroke-width="1.1"/></svg>
<svg class="b" style="left:240.5px;top:248px;" width="13" height="15" viewBox="0 0 13 15"><path d="M0.6 13.6H11.9V6L6.25 0.6L0.6 6Z" fill="#2f3032" stroke="#5c5f61" stroke-width="1.2"/><path d="M3.7 9H8.8" stroke="#6a6d6f" stroke-width="1.1"/></svg>
<svg class="b" style="left:240.5px;top:440px;" width="13" height="15" viewBox="0 0 13 15"><path d="M0.6 13.6H11.9V6L6.25 0.6L0.6 6Z" fill="#2f3032" stroke="#5c5f61" stroke-width="1.2"/><path d="M3.7 9H8.8" stroke="#6a6d6f" stroke-width="1.1"/></svg>
<svg class="b" style="left:240.5px;top:673px;" width="13" height="15" viewBox="0 0 13 15"><path d="M0.6 13.6H11.9V6L6.25 0.6L0.6 6Z" fill="#2f3032" stroke="#5c5f61" stroke-width="1.2"/><path d="M3.7 9H8.8" stroke="#6a6d6f" stroke-width="1.1"/></svg>
<div class="b" style="left:255px;top:204px;width:2px;height:19px;background:#bbbbbb;"></div>
<div class="b" style="left:256px;top:962px;width:1097px;height:12px;background:rgba(120,120,120,0.45);"></div>
<div class="b" style="left:534px;top:968px;width:54px;height:5px;background:#6e6c5c;"></div>
<div class="b" style="left:597px;top:968px;width:81px;height:5px;background:#6e6c5c;"></div>
<div class="b" style="left:687px;top:968px;width:171px;height:5px;background:#6e6c5c;"></div>
<div class="b" style="left:867px;top:968px;width:54px;height:5px;background:#6e6c5c;"></div>
<div class="b" style="left:930px;top:968px;width:72px;height:5px;background:#6e6c5c;"></div>
<div class="b" style="left:1335px;top:203px;width:1px;height:42px;background:#3d3d3d;"></div>
<div class="b" style="left:1615px;top:204px;width:15px;height:15px;background:#3a2f12;"></div>
<div class="b" style="left:1616px;top:205px;width:13px;height:13px;background:#c89b1c;"></div>
<div class="b" style="left:1620px;top:224px;width:10px;height:334px;background:rgba(160,160,160,0.5);"></div>
<div class="b" style="left:1614px;top:232px;width:17px;height:3px;background:#5a4a18;"></div>
<div class="b" style="left:1614px;top:232.5px;width:17px;height:2px;background:#d0a536;"></div>
<div class="b" style="left:1614px;top:299px;width:17px;height:3px;background:#5a4a18;"></div>
<div class="b" style="left:1614px;top:299.5px;width:17px;height:2px;background:#d0a536;"></div>
<div class="b" style="left:1614px;top:308px;width:17px;height:3px;background:#5a4a18;"></div>
<div class="b" style="left:1614px;top:308.5px;width:17px;height:2px;background:#d0a536;"></div>
<div class="b" style="left:1614px;top:337px;width:17px;height:3px;background:#5a4a18;"></div>
<div class="b" style="left:1614px;top:337.5px;width:17px;height:2px;background:#d0a536;"></div>
<div class="b" style="left:1614px;top:346px;width:17px;height:3px;background:#5a4a18;"></div>
<div class="b" style="left:1614px;top:346.5px;width:17px;height:2px;background:#d0a536;"></div>
<div class="b" style="left:1614px;top:410px;width:17px;height:3px;background:#5a4a18;"></div>
<div class="b" style="left:1614px;top:410.5px;width:17px;height:2px;background:#d0a536;"></div>
<div class="b" style="left:1614px;top:560px;width:17px;height:3px;background:#5a4a18;"></div>
<div class="b" style="left:1614px;top:560.5px;width:17px;height:2px;background:#d0a536;"></div>
<div class="b" style="left:1614px;top:664px;width:17px;height:3px;background:#5a4a18;"></div>
<div class="b" style="left:1614px;top:664.5px;width:17px;height:2px;background:#d0a536;"></div>
<svg class="b" style="left:2.5px;top:4px;" width="19" height="20" viewBox="0 0 19 20"><defs><linearGradient id="psg" x1="0" y1="1" x2="1" y2="0"><stop offset="0" stop-color="#b24ac9"/><stop offset="0.5" stop-color="#a034c0"/><stop offset="1" stop-color="#ff45a0"/></linearGradient></defs>
<path d="M1 4L6 0.5L15 1L19 7L17 16L10 19.5L2 17L0 9Z" fill="url(#psg)"/><rect x="3.2" y="3.8" width="12.6" height="12.6" fill="#000"/>
<text x="4.3" y="10.6" font-family="Liberation Sans, sans-serif" font-weight="bold" font-size="7.2" fill="#fff">PS</text><rect x="4.6" y="13.2" width="4.8" height="1.1" fill="#fff"/></svg>
<div class="b" style="left:1765px;top:13px;width:12px;height:1px;background:#000;"></div>
<svg class="b" style="left:1823px;top:8px;" width="13" height="13" viewBox="0 0 13 13"><path d="M2.5 2.5V0.5H11.5V9.5H9.5" fill="none" stroke="#000"/><rect x="0.5" y="2.5" width="9" height="9" fill="none" stroke="#000"/></svg>
<svg class="b" style="left:1882px;top:8px;" width="13" height="13" viewBox="0 0 13 13"><path d="M0.4 0.4L12 12M12 0.4L0.4 12" stroke="#000" stroke-width="1.1"/></svg>
<svg class="b" style="left:12px;top:69.4px;" width="18" height="14" viewBox="0 0 18 14"><path d="M0 0H6.4L9.2 2.6H18V13.6H0Z" fill="#8b9ca7"/></svg>
<svg class="b" style="left:36px;top:63px;" width="12" height="30" viewBox="0 0 12 30"><path d="M1 1L9 15L1 29" fill="none" stroke="#2f3133" stroke-width="1.2"/><path d="M2.2 1L10.2 15L2.2 29" fill="none" stroke="#494c4e" stroke-width="1"/></svg>
<svg class="b" style="left:52px;top:67.2px;overflow:visible;" width="19" height="20" viewBox="0 0 19 20"><path d="M7.2 0H15.2V9.2H2.7V4.8H7.2Z" fill="#9aa5ac"/><path d="M2.7 3.9L6.3 0V3.9Z" fill="#9aa5ac"/><rect x="0" y="10.2" width="19" height="9.3" fill="#9d7cc0"/><text x="9.5" y="17.3" font-family="Liberation Sans, sans-serif" font-size="10" fill="#54397a" text-anchor="middle" textLength="16.5" lengthAdjust="spacingAndGlyphs">php</text></svg>
<svg class="b" style="left:152px;top:63px;" width="12" height="30" viewBox="0 0 12 30"><path d="M1 1L9 15L1 29" fill="none" stroke="#2f3133" stroke-width="1.2"/><path d="M2.2 1L10.2 15L2.2 29" fill="none" stroke="#494c4e" stroke-width="1"/></svg>
<div class="b" style="left:1627px;top:61px;width:91px;height:30px;box-sizing:border-box;border:1px solid #5e6163;border-radius:4px;background:linear-gradient(#404345,#393c3e);"></div>
<svg class="b" style="left:1698.5px;top:74px;" width="13" height="8" viewBox="0 0 13 8"><path d="M0.5 0.5H11.5L6 7Z" fill="#b4b6b8"/></svg>
<svg class="b" style="left:1730px;top:68px;" width="14" height="18" viewBox="0 0 14 18"><path d="M0.5 0.5L13 9L0.5 17.5Z" fill="#5c5f61"/></svg>
<svg class="b" style="left:1758px;top:67px;" width="20" height="20" viewBox="0 0 20 20"><ellipse cx="8" cy="10" rx="7" ry="6.3" fill="#5c5f61"/><path d="M10.8 4.2C13 6.5 13 13.5 10.8 15.8" stroke="#3c3f41" stroke-width="0.9" fill="none"/><path d="M4 4.8L2.6 1.6M8 3.8V1M11.6 4.8L13 1.8M4 15.2L2.6 18.4M8 16.2V19M11.6 15.2L13 18.2M14.2 6.5C15 4.8 17 4.4 19 4.6M14.2 13.5C15 15.2 17 15.6 19 15.4" stroke="#5c5f61" stroke-width="1.2" fill="none"/></svg>
<svg class="b" style="left:1790px;top:67px;" width="19" height="20" viewBox="0 0 19 20"><defs><clipPath id="cvc"><path d="M4 1.3H10L18.2 10L10 18.7H4Z"/></clipPath></defs><g clip-path="url(#cvc)"><path d="M-18 -2L6 22 M-14.4 -2L9.6 22 M-10.8 -2L13.2 22 M-7.2 -2L16.8 22 M-3.6 -2L20.4 22 M0 -2L24 22 M3.6 -2L27.6 22 M7.2 -2L31.2 22 M10.8 -2L34.8 22 M7.2 -2L-16.8 22 M10.8 -2L-13.2 22 M14.4 -2L-9.6 22 M18 -2L-6 22 M21.6 -2L-2.4 22 M25.2 -2L1.2 22 M28.8 -2L4.8 22 M32.4 -2L8.4 22 M36 -2L12 22" stroke="#5c5f61" stroke-width="1.2" fill="none"/></g><path d="M0.3 1.3L8 10L0.3 18.7Z" fill="#5c5f61"/></svg>
<svg class="b" style="left:1820px;top:67px;" width="20" height="20" viewBox="0 0 20 20"><circle cx="5.4" cy="5" r="3.8" fill="#3c3f41" stroke="#e0604f" stroke-width="1.5"/><path d="M2.8 7.6L8 2.4" stroke="#e0604f" stroke-width="1.5"/><ellipse cx="4.8" cy="14.5" rx="3.4" ry="3.6" fill="#35b552"/><path d="M2 10.8L1 9.6M4.8 10.4V9M7.6 10.8L8.6 9.6M2 18.2L1 19.4M4.8 18.6V20M7.6 18.2L8.6 19.4" stroke="#35b552" stroke-width="1.1"/><path d="M7.4 12.6L10 13.4M7.8 14.6H10.4M7.4 16.4L10 15.8" stroke="#c8c8c8" stroke-width="1"/><path d="M11.8 1.2H14.2C17.8 3 19 7.5 19 10C19 12.5 17.8 17 14.2 18.8H11.8V14.2H14C15.2 13 15.2 7 14 5.8H11.8Z" fill="#9a9c9e"/></svg>
<div class="b" style="left:1854px;top:69.5px;width:15px;height:15px;background:#5c5f61;"></div>
<svg class="b" style="left:1881px;top:62px;" width="2" height="30" viewBox="0 0 2 30"><path d="M0.5 0V30" stroke="#6b6d6f" stroke-width="1" stroke-dasharray="1.3 2.2"/></svg>
<svg class="b" style="left:1891px;top:67px;" width="20" height="20" viewBox="0 0 20 20"><circle cx="8" cy="8" r="5.6" fill="none" stroke="#a6a8aa" stroke-width="2.3"/><path d="M12.2 12.2L18 18" stroke="#a6a8aa" stroke-width="3" stroke-linecap="round"/></svg>
<svg class="b" style="left:30px;top:104px;" width="20" height="18" viewBox="0 0 20 18"><path d="M1 7.5H8.6L4.8 12.2Z" fill="#9a9c9e"/><path d="M11 3H18.6V5.4H13.8V8.4H17.8V10.6H13.8V14H18.8V16.4H11Z" fill="#9a9c9e"/><rect x="14.6" y="0.4" width="4.2" height="2" fill="#3f97c4"/></svg>
<svg class="b" style="left:53px;top:104px;" width="18" height="18" viewBox="0 0 18 18"><circle cx="9" cy="9" r="7" fill="none" stroke="#9a9c9e" stroke-width="2"/><path d="M9 2V6M9 12V16M2 9H6M12 9H16" stroke="#9a9c9e" stroke-width="2"/></svg>
<svg class="b" style="left:80px;top:104px;" width="16" height="18" viewBox="0 0 16 18"><path d="M1 7.5H15M1 10.5H15" stroke="#9a9c9e" stroke-width="1.6"/><path d="M1 6V12M15 6V12" stroke="#9a9c9e" stroke-width="1"/><path d="M8 0.5V5M5.5 3L8 5.6L10.5 3M8 17.5V13M5.5 15L8 12.4L10.5 15" stroke="#9a9c9e" stroke-width="1.4" fill="none"/></svg>
<div class="b" style="left:106px;top:100px;width:3px;height:24px;background:linear-gradient(rgba(140,142,144,0),rgba(140,142,144,1) 30%,rgba(140,142,144,1) 70%,rgba(140,142,144,0));"></div>
<svg class="b" style="left:116px;top:105px;" width="17" height="17" viewBox="0 0 17 17"><path d="M16.19 6.99 L16.19 9.61 L13.73 9.65 L13.10 11.18 L14.81 12.95 L12.95 14.81 L11.18 13.10 L9.65 13.73 L9.61 16.19 L6.99 16.19 L6.95 13.73 L5.42 13.10 L3.65 14.81 L1.79 12.95 L3.50 11.18 L2.87 9.65 L0.41 9.61 L0.41 6.99 L2.87 6.95 L3.50 5.42 L1.79 3.65 L3.65 1.79 L5.42 3.50 L6.95 2.87 L6.99 0.41 L9.61 0.41 L9.65 2.87 L11.18 3.50 L12.95 1.79 L14.81 3.65 L13.10 5.42 L13.73 6.95Z M10.60 8.30 A2.30 2.30 0 1 0 6.00 8.30 A2.30 2.30 0 1 0 10.60 8.30 Z" fill="#9a9c9e" fill-rule="evenodd"/></svg>
<svg class="b" style="left:135px;top:111px;" width="7" height="5" viewBox="0 0 7 5"><path d="M0.3 0.5H6.3L3.3 4.2Z" fill="#9a9c9e"/></svg>
<svg class="b" style="left:151px;top:105px;" width="18" height="17" viewBox="0 0 18 17"><rect x="1" y="1" width="3.6" height="14.5" fill="#9a9c9e"/><rect x="2.2" y="9" width="1.2" height="5" fill="#3c3f41"/><path d="M7 5.5H16M9.8 2.8L7 5.5L9.8 8.2" stroke="#9a9c9e" stroke-width="1.4" fill="none"/></svg>
<svg class="b" style="left:1832px;top:105px;" width="17" height="17" viewBox="0 0 17 17"><path d="M16.19 6.99 L16.19 9.61 L13.73 9.65 L13.10 11.18 L14.81 12.95 L12.95 14.81 L11.18 13.10 L9.65 13.73 L9.61 16.19 L6.99 16.19 L6.95 13.73 L5.42 13.10 L3.65 14.81 L1.79 12.95 L3.50 11.18 L2.87 9.65 L0.41 9.61 L0.41 6.99 L2.87 6.95 L3.50 5.42 L1.79 3.65 L3.65 1.79 L5.42 3.50 L6.95 2.87 L6.99 0.41 L9.61 0.41 L9.65 2.87 L11.18 3.50 L12.95 1.79 L14.81 3.65 L13.10 5.42 L13.73 6.95Z M10.60 8.30 A2.30 2.30 0 1 0 6.00 8.30 A2.30 2.30 0 1 0 10.60 8.30 Z" fill="#9a9c9e" fill-rule="evenodd"/></svg>
<svg class="b" style="left:1850px;top:111px;" width="7" height="5" viewBox="0 0 7 5"><path d="M0.3 0.5H6.3L3.3 4.2Z" fill="#9a9c9e"/></svg>
<svg class="b" style="left:1866px;top:105px;" width="18" height="17" viewBox="0 0 18 17"><rect x="13" y="1" width="3.6" height="14.5" fill="#9a9c9e"/><rect x="14.2" y="9" width="1.2" height="5" fill="#3c3f41"/><path d="M1 5.5H10M7.2 2.8L10 5.5L7.2 8.2" stroke="#9a9c9e" stroke-width="1.4" fill="none"/></svg>
<svg class="b" style="left:1650px;top:145px;" width="20" height="22" viewBox="0 0 20 22"><path d="M2 0.5H11L15.5 5V19.5H2Z" fill="none" stroke="#9aa4ab" stroke-width="1.5"/><path d="M11 0.5V5H15.5" fill="none" stroke="#9aa4ab" stroke-width="1.2"/><rect x="0" y="7.5" width="18.5" height="9" fill="#62c554"/><text x="9.2" y="15.3" font-family="Liberation Sans, sans-serif" font-size="9.5" fill="#2c6a26" text-anchor="middle">ftp</text></svg>
<div class="t " style="left:1675px;top:147px;font-size:15px;color:#bbbbbb;letter-spacing:-0.084px;">pansionat-novgor...</div>
<div class="b" style="left:1806px;top:141px;width:1px;height:29px;background:#515456;"></div>
<svg class="b" style="left:1809px;top:152px;" width="12" height="9" viewBox="0 0 12 9"><path d="M0 0H11L5.5 8.6Z" fill="#b4b6b8"/></svg>
<div class="b" style="left:1830px;top:141px;width:30px;height:30px;box-sizing:border-box;border:1px solid #5a5d5f;border-radius:3px;background:#4c5052;"></div>
<div class="t " style="left:1839px;top:146px;font-size:14px;color:#bbbbbb;">...</div>
<svg class="b" style="left:1874px;top:150px;" width="10" height="8" viewBox="0 0 10 8"><path d="M0.6 0.8L3.6 3.6L0.6 6.4M5.4 0.8L8.4 3.6L5.4 6.4" fill="none" stroke="#a6a8aa" stroke-width="1.1"/></svg>
<svg class="b" style="left:1519px;top:175px;" width="20" height="18" viewBox="0 0 20 18"><path d="M9 5.6L15 0V3.4H19.4V8.2H15V11.4Z" fill="#1fa0e0"/><path d="M11 12.3L5 6.7V10H1V14.7H5V17.9Z" fill="#1fa0e0"/></svg>
<svg class="b" style="left:1551px;top:175px;" width="19" height="19" viewBox="0 0 19 19"><path d="M2.5 6H11A5 5 0 0 1 11 16H2.2" fill="none" stroke="#5d5f61" stroke-width="2.8"/><path d="M6.5 0.8L0.8 6L6.5 11.2Z" fill="#5d5f61"/></svg>
<svg class="b" style="left:1581px;top:174px;" width="20" height="20" viewBox="0 0 20 20"><defs><linearGradient id="upg" x1="0" y1="0" x2="0" y2="1"><stop offset="0" stop-color="#62b6e6"/><stop offset="1" stop-color="#3592c4"/></linearGradient></defs><path d="M1 11H5.5V14H14.5V11H19V19H1Z" fill="#8a8c8e"/><path d="M10 1L15.8 7.5H12.3V15H7.7V7.5H4.2Z" fill="url(#upg)"/></svg>
<div class="b" style="left:1434px;top:228px;width:148px;height:36px;border-radius:4px;background:#3f4142;"></div>
<svg class="b" style="left:1445px;top:238px;" width="18" height="18" viewBox="0 0 18 18"><circle cx="9" cy="9" r="9" fill="#dd4b3e"/><path d="M9 9L1.3 4.5A9 9 0 0 0 6 17.5Z" fill="#1da462"/><path d="M9 9L6 17.5A9 9 0 0 0 17.8 7.2Z" fill="#ffce44"/><path d="M9 9L17.8 7.2A9 9 0 0 0 1.3 4.5Z" fill="#dd4b3e"/><circle cx="9" cy="9" r="4.2" fill="#fff"/><circle cx="9" cy="9" r="3.2" fill="#4a8af4"/></svg>
<svg class="b" style="left:1472px;top:238px;" width="18" height="18" viewBox="0 0 18 18"><circle cx="9" cy="9" r="8.6" fill="#e8631c"/><circle cx="9.5" cy="7.5" r="5.2" fill="#2a4d9b"/><path d="M1 8C2 13 5 16.5 9 17C14 17 17.5 13 17.3 8C16 12 13 13.5 10.5 12.5C8 11.5 8.5 9 10.5 8.5C8 7.5 6 8.5 5.2 6.5C4 7 3 5.5 3.5 3.5C1.5 5 1 6.5 1 8Z" fill="#f4a22a"/></svg>
<svg class="b" style="left:1500px;top:238px;" width="18" height="18" viewBox="0 0 18 18"><circle cx="9" cy="9" r="8.8" fill="#d8dde2"/><circle cx="9" cy="9" r="7.6" fill="#2a8ff0"/><path d="M13.8 4.2L10 10L8 8Z" fill="#fff"/><path d="M4.2 13.8L8 8L10 10Z" fill="#e8413a"/></svg>
<svg class="b" style="left:1527px;top:238px;" width="18" height="18" viewBox="0 0 18 18"><ellipse cx="9" cy="9" rx="8.2" ry="8.8" fill="#e0131c"/><ellipse cx="9" cy="9" rx="3.3" ry="6.4" fill="#3c3f41"/></svg>
<svg class="b" style="left:1554px;top:237px;" width="21" height="20" viewBox="0 0 21 20"><text x="3" y="18.8" font-family="Liberation Sans, sans-serif" font-weight="bold" font-size="29" fill="#3cc0f0" textLength="16.5" lengthAdjust="spacingAndGlyphs">e</text><path d="M2.2 17.5C-1.5 13 6 4.5 13 1.8C17.5 0.3 20.5 1.8 18.5 5.5" fill="none" stroke="#f0c030" stroke-width="1.6"/></svg>
<div class="b" style="left:16px;top:140px;width:0;height:0;"><div style="position:absolute;white-space:pre;font-size:13px;line-height:16px;height:16px;left:-28px;top:-8px;width:56px;color:#dddddd;letter-spacing:0.109px;transform:rotate(-90deg);transform-origin:50% 50%;"><u style="text-underline-offset:2px">1</u>: Project</div></div>
<svg class="b" style="left:6px;top:171px;" width="17" height="17" viewBox="0 0 17 17"><path d="M0 0.5H7L8.5 3.5H16V10H9V16H0Z" fill="#8d9aa3"/><rect x="9.5" y="10.5" width="6.5" height="5.5" fill="#26282a"/><rect x="11" y="13.6" width="3.4" height="1.2" fill="#c8c8c8"/></svg>
<div class="b" style="left:16px;top:787px;width:0;height:0;"><div style="position:absolute;white-space:pre;font-size:13px;line-height:16px;height:16px;left:-33px;top:-8px;width:66px;color:#bbbbbb;letter-spacing:-0.100px;transform:rotate(-90deg);transform-origin:50% 50%;"><u style="text-underline-offset:2px">7</u>: Structure</div></div>
<svg class="b" style="left:7px;top:826px;" width="15" height="15" viewBox="0 0 15 15"><rect x="0" y="0" width="5.6" height="5.6" fill="#e8a33c"/><rect x="8.4" y="0" width="5.6" height="5.6" fill="#8d9aa3"/><rect x="0" y="8.4" width="5.6" height="5.6" fill="#8d9aa3"/><rect x="8.4" y="8.4" width="5.6" height="5.6" fill="#8d9aa3"/><path d="M5.6 5.6L8.4 8.4" stroke="#8d9aa3" stroke-width="1"/></svg>
<div class="b" style="left:16px;top:905px;width:0;height:0;"><div style="position:absolute;white-space:pre;font-size:13px;line-height:16px;height:16px;left:-33px;top:-8px;width:66px;color:#bbbbbb;letter-spacing:-0.160px;transform:rotate(-90deg);transform-origin:50% 50%;"><u style="text-underline-offset:2px">2</u>: Favorites</div></div>
<svg class="b" style="left:6px;top:942px;" width="17" height="17" viewBox="0 0 17 17"><path d="M8.5 0.5L11 6L16.8 6.6L12.4 10.6L13.7 16.4L8.5 13.4L3.3 16.4L4.6 10.6L0.2 6.6L6 6Z" fill="#f0a630"/></svg>
<svg class="b" style="left:1899px;top:110px;" width="13" height="17" viewBox="0 0 13 17"><rect x="0" y="0" width="13" height="4.2" fill="#7d8082"/><rect x="0" y="5.4" width="13" height="3.2" fill="#7d8082"/><rect x="0" y="9.8" width="13" height="3.2" fill="#7d8082"/><rect x="0" y="14" width="13" height="3" fill="#7d8082"/><rect x="10" y="14.8" width="1.6" height="1.4" fill="#62b543"/></svg>
<div class="b" style="left:1904.5px;top:171.5px;width:0;height:0;"><div style="position:absolute;white-space:pre;font-size:13px;line-height:16px;height:16px;left:-37.5px;top:-8px;width:75px;color:#e6e6e6;letter-spacing:-0.078px;transform:rotate(90deg);transform-origin:50% 50%;">Remote Host</div></div>
<svg class="b" style="left:1896px;top:235px;" width="17" height="21" viewBox="0 0 17 21"><ellipse cx="8.5" cy="3.2" rx="8" ry="3" fill="#3f9cc7"/><path d="M0.5 5.6C2 8 15 8 16.5 5.6V8.8C15 11.2 2 11.2 0.5 8.8Z" fill="#3f9cc7"/><path d="M0.5 10.6C2 13 15 13 16.5 10.6V13.8C15 16.2 2 16.2 0.5 13.8Z" fill="#3f9cc7"/><path d="M0.5 15.6C2 18 15 18 16.5 15.6V17.6C15 21 2 21 0.5 17.6Z" fill="#3f9cc7"/></svg>
<div class="b" style="left:1904.5px;top:292.5px;width:0;height:0;"><div style="position:absolute;white-space:pre;font-size:13px;line-height:16px;height:16px;left:-24.5px;top:-8px;width:49px;color:#bbbbbb;letter-spacing:-0.831px;transform:rotate(90deg);transform-origin:50% 50%;">Database</div></div>
<svg class="b" style="left:37px;top:981px;" width="19" height="18" viewBox="0 0 19 18"><circle cx="10.5" cy="11" r="5.8" fill="#f0b57a"/><path d="M4.5 10C5 6 8 4.5 10.5 4.5C13 4.5 16 6 16.5 10C14 8.5 7 8.5 4.5 10Z" fill="#6b4a2e"/><path d="M4 14.5C6 18.5 15 18.5 17 14.5L17 17.5H4Z" fill="#4b9cd3"/><circle cx="4.5" cy="4.5" r="4" fill="#d0d2d4"/><path d="M2.5 4.5H6.5" stroke="#555" stroke-width="1.2"/><circle cx="8.5" cy="11" r="0.8" fill="#333"/><circle cx="12.5" cy="11" r="0.8" fill="#333"/></svg>
<svg class="b" style="left:140px;top:982px;" width="16" height="16" viewBox="0 0 16 16"><rect x="0" y="0" width="16" height="16" fill="#87898b"/><rect x="1" y="2.6" width="14" height="12.4" fill="#0d0d0d"/><path d="M3.5 6L6.5 8.5L3.5 11" stroke="#ddd" stroke-width="1.2" fill="none"/><path d="M7.5 11.5H11.5" stroke="#ddd" stroke-width="1.2"/></svg>
<svg class="b" style="left:1795px;top:980px;" width="21" height="20" viewBox="0 0 21 20"><ellipse cx="10" cy="9" rx="8.6" ry="7.8" fill="none" stroke="#8f9193" stroke-width="1.5"/><path d="M13.5 15.5L18.8 18.5L16.5 13.5" fill="#3c3f41" stroke="#8f9193" stroke-width="1.5" stroke-linejoin="round"/></svg>
<svg class="b" style="left:10px;top:1008px;" width="19" height="19" viewBox="0 0 19 19"><rect x="1" y="1" width="16.5" height="13.5" fill="#6f7173" stroke="#a2a4a6" stroke-width="1.6"/><rect x="0.5" y="16.6" width="17.5" height="1.6" fill="#a2a4a6"/></svg>
<svg class="b" style="left:1783px;top:1013px;" width="7" height="11" viewBox="0 0 7 11"><path d="M0.3 4.3L3.3 0.6L6.3 4.3ZM0.3 6.3L3.3 10L6.3 6.3Z" fill="#a4a6a8"/></svg>
<svg class="b" style="left:1843px;top:1013px;" width="7" height="11" viewBox="0 0 7 11"><path d="M0.3 4.3L3.3 0.6L6.3 4.3ZM0.3 6.3L3.3 10L6.3 6.3Z" fill="#a4a6a8"/></svg>
<svg class="b" style="left:1865px;top:1010px;" width="13" height="14" viewBox="0 0 13 14"><path d="M1.5 6.5V4A2.6 2.6 0 0 1 6.7 4V5" fill="none" stroke="#9a9c9e" stroke-width="1.5"/><rect x="4" y="6" width="8" height="7" fill="#9a9c9e"/><rect x="7" y="8.4" width="2" height="2.6" fill="#3c3f41"/></svg>
<svg class="b" style="left:1895px;top:1008px;" width="18" height="21" viewBox="0 0 18 21"><path d="M4.5 1H13.5L14.5 6.5H17.5V8H0.5V6.5H3.5Z" fill="#7f8183"/><rect x="7.6" y="2.4" width="2.8" height="2.4" fill="#3c3f41"/><path d="M3.2 8.6H14.8C15.2 12 13.5 15.2 9 15.2C4.5 15.2 2.8 12 3.2 8.6Z" fill="#7f8183"/><circle cx="6.4" cy="10.4" r="1" fill="#3c3f41"/><circle cx="11.6" cy="10.4" r="1" fill="#3c3f41"/><path d="M6.6 13.4C7.6 12.2 10.4 12.2 11.4 13.4" stroke="#3c3f41" stroke-width="1" fill="none"/><path d="M2.5 20.5C2.8 17.2 5 15.8 9 15.8C13 15.8 15.2 17.2 15.5 20.5H10.5L9 18L7.5 20.5Z" fill="#7f8183"/></svg>
<div class="b" style="left:0;top:1030px;width:1920px;height:50px;background:linear-gradient(90deg,#1e3640 0%,#1c3340 35%,#1a2f41 60%,#172b43 80%,#152842 100%);"></div>
<div class="b" style="left:494px;top:1030px;width:61px;height:50px;background:rgba(255,255,255,0.16);"></div>
<div class="b" style="left:375px;top:1077px;width:50px;height:3px;background:#8fa4b0;"></div>
<div class="b" style="left:437px;top:1077px;width:50px;height:3px;background:#8fa4b0;"></div>
<div class="b" style="left:494px;top:1077px;width:61px;height:3px;background:#9fb3bd;"></div>
<svg class="b" style="left:20px;top:1044px;" width="20" height="20" viewBox="0 0 20 20"><path d="M0 2.8L8.2 1.7V9.5H0ZM9.2 1.5L20 0V9.5H9.2ZM0 10.5H8.2V18.3L0 17.2ZM9.2 10.5H20V20L9.2 18.5Z" fill="#fff"/></svg>
<svg class="b" style="left:80px;top:1044px;" width="21" height="21" viewBox="0 0 21 21"><circle cx="13" cy="7.5" r="6.2" fill="none" stroke="#fff" stroke-width="1.5"/><path d="M8.6 12L1 19.8" stroke="#fff" stroke-width="1.5"/></svg>
<svg class="b" style="left:139px;top:1045px;" width="22" height="19" viewBox="0 0 22 19"><rect x="2.8" y="4.8" width="10.4" height="9.4" fill="none" stroke="#fff" stroke-width="1.5"/><path d="M0.8 1V3M0.8 16V18M0.8 0.8H15.2M0.8 18.2H15.2M15.2 1V3M15.2 16V18" stroke="#fff" stroke-width="1.5" fill="none"/><path d="M19.8 0.5V4M19.8 7V13M19.8 15.5V18.5" stroke="#fff" stroke-width="1.5"/></svg>
<svg class="b" style="left:200px;top:1040px;" width="28" height="28" viewBox="0 0 28 28"><rect x="0.8" y="0.8" width="26.4" height="26.4" fill="#0b1247" stroke="#8fb6f5" stroke-width="1.6"/><text x="14" y="20" font-family="Liberation Sans, sans-serif" font-weight="bold" font-size="15.5" fill="#8fc0ff" text-anchor="middle">Ps</text></svg>
<svg class="b" style="left:262px;top:1042px;" width="28" height="25" viewBox="0 0 28 25"><path d="M0.5 2.5H10L12.5 5H27.5V22H0.5Z" fill="#e9a92a"/><path d="M0.5 7.5H27.5V23.5H0.5Z" fill="#fcd462"/><path d="M2 7.5H14V5.6H2Z" fill="#fff3c4" opacity="0.5"/><path d="M6 14.5H22V23.5H17.5V19H10.5V23.5H6Z" fill="#3e94da"/></svg>
<svg class="b" style="left:323px;top:1040px;" width="29" height="30" viewBox="0 0 29 30"><path d="M14.5 0.8C6 0.8 1 4.5 1 12.5C1 18 3 21.5 7 23.2V28.5L12 24.3C13 24.4 13.8 24.4 14.5 24.4C23 24.4 28 20.5 28 12.5C28 4.5 23 0.8 14.5 0.8Z" fill="#7d51c9"/><path d="M14.5 2.8C7.5 2.8 3.2 5.8 3.2 12.5C3.2 17.2 5 20 8.8 21.5V24.5L12 22.2C13 22.3 13.8 22.3 14.5 22.3C21.5 22.3 25.8 19.2 25.8 12.5C25.8 5.8 21.5 2.8 14.5 2.8Z" fill="#fff"/><path d="M9.5 7.5C10.5 6.8 11.3 7.3 12 8.5C12.8 9.8 12.6 10.5 11.6 11.2C11 11.7 11.2 12.4 12.6 14C14 15.6 15 16.2 15.6 15.6C16.5 14.7 17.2 14.6 18.3 15.4C19.6 16.4 20.2 17 19.4 18.2C18.4 19.6 17 19.8 15 18.8C12.6 17.6 10.5 15.5 9.2 13C8 10.6 8.3 8.5 9.5 7.5Z" fill="#7d51c9"/><path d="M15 6.2C18.5 6.5 20.8 8.8 21 12.4M15.2 8.4C17.3 8.6 18.7 10 18.8 12.2M15.4 10.4C16.3 10.5 16.8 11 16.9 12" stroke="#7d51c9" stroke-width="1" fill="none" stroke-linecap="round"/></svg>
<svg class="b" style="left:385px;top:1040px;" width="29" height="29" viewBox="0 0 29 29"><circle cx="14.5" cy="14.5" r="14" fill="#de4b3c"/><path d="M14.5 14.5L2.4 7.5A14 14 0 0 0 9.8 27.7Z" fill="#1ea362"/><path d="M14.5 14.5L9.8 27.7A14 14 0 0 0 28.2 11.5Z" fill="#fdcd43"/><path d="M14.5 14.5L28.2 11.5A14 14 0 0 0 2.4 7.5Z" fill="#de4b3c"/><circle cx="14.5" cy="14.5" r="6.5" fill="#fff"/><circle cx="14.5" cy="14.5" r="5.2" fill="#4a8bf5"/></svg>
<svg class="b" style="left:447px;top:1040px;" width="29" height="29" viewBox="0 0 29 29"><circle cx="9" cy="9" r="8.5" fill="#12a5f4"/><circle cx="20" cy="20" r="8.5" fill="#12a5f4"/><circle cx="14.5" cy="14.5" r="12" fill="#12a5f4"/><text x="14.5" y="22" font-family="Liberation Sans, sans-serif" font-weight="bold" font-size="21" fill="#fff" text-anchor="middle">S</text></svg>
<svg class="b" style="left:509px;top:1040px;" width="30" height="30" viewBox="0 0 30 30"><defs><linearGradient id="psg2" x1="0" y1="1" x2="1" y2="0"><stop offset="0" stop-color="#7a3bd6"/><stop offset="0.5" stop-color="#b03ac4"/><stop offset="1" stop-color="#ff3f9f"/></linearGradient></defs>
<path d="M2 6L10 0.5L24 1.5L29.5 11L27 25L16 29.5L3 26L0.5 14Z" fill="url(#psg2)"/><rect x="5.5" y="5.5" width="19" height="19" fill="#000"/><text x="7.2" y="15.8" font-family="Liberation Sans, sans-serif" font-weight="bold" font-size="10.5" fill="#fff">PS</text><rect x="7.5" y="19.8" width="7.2" height="1.6" fill="#fff"/></svg>
<svg class="b" style="left:1699px;top:1048px;" width="17" height="10" viewBox="0 0 17 10"><path d="M1 9L8.5 1.5L16 9" fill="none" stroke="#fff" stroke-width="1.5"/></svg>
<svg class="b" style="left:1727px;top:1045px;" width="24" height="18" viewBox="0 0 24 18"><path d="M1 6H4.5L9 1.5V16.5L4.5 12H1Z" fill="none" stroke="#fff" stroke-width="1.2"/><path d="M12 6.5C13 8 13 10 12 11.5M14.8 4.5C16.6 7.5 16.6 10.5 14.8 13.5M17.6 2.5C20.4 7 20.4 11 17.6 15.5" fill="none" stroke="#fff" stroke-width="1.2"/></svg>
<svg class="b" style="left:1757px;top:1046px;" width="22" height="17" viewBox="0 0 22 17"><rect x="5.5" y="0.8" width="15.5" height="11" fill="none" stroke="#fff" stroke-width="1.3"/><path d="M9 15.8H18M13.5 12V15.5" stroke="#fff" stroke-width="1.3"/><rect x="1" y="0.5" width="3.2" height="9" fill="#172b43" stroke="#fff" stroke-width="1.1"/></svg>
<div class="t " style="left:1792px;top:1046px;font-size:14px;color:#ffffff;letter-spacing:-0.678px;">РУС</div>
<div class="t " style="left:1854px;top:1034px;font-size:14px;color:#ffffff;letter-spacing:-0.607px;">12:45</div>
<div class="t " style="left:1836px;top:1057px;font-size:14px;color:#ffffff;letter-spacing:-0.007px;">16.04.2020</div>
<div class="b" style="left:1914px;top:1030px;width:1px;height:50px;background:#6f7d88;"></div>
</body></html>
